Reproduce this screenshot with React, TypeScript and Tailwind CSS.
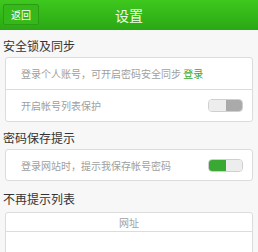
import React from 'react'

const font = { fontFamily: '"Noto Sans CJK SC", "Noto Sans", sans-serif' }

const Toggle: React.FC<{ on: boolean }> = ({ on }) => (
  <div className="flex h-[13px] w-[35px] overflow-hidden rounded-[4px] border border-[#cfcfcf]">
    <div className={on ? 'flex-1 bg-[#3aa934]' : 'flex-1 bg-[#ededed]'} />
    <div className={on ? 'flex-1 bg-[#ededed]' : 'flex-1 bg-[#aaaaaa]'} />
  </div>
)

export default function App() {
  return (
    <div className="h-[252px] w-[258px] overflow-hidden bg-[#f7f7f7]" style={font}>
      <div className="relative flex h-[30px] items-center justify-center bg-gradient-to-b from-[#3ec81e] to-[#2aa814]">
        <div className="absolute left-[3px] top-[4px] flex h-[21px] w-[36px] items-center justify-center rounded-[2px] border border-[#2a9d14] bg-[#35b81a] text-[10px] text-white">
          返回
        </div>
        <span className="text-[14px] text-[#f0ffe8]">设置</span>
      </div>

      <div className="px-[3px] pt-[9px] pb-[4px] text-[12px] leading-[14px] text-[#333]">安全锁及同步</div>
      <div className="mx-[5px] rounded-[3px] border border-[#dcdcdc] bg-white">
        <div className="flex h-[32px] items-center border-b border-[#dcdcdc] pl-[15px] text-[10px] text-[#a0a0a0]">
          登录个人账号，可开启密码安全同步&nbsp;<span className="text-[#3aa934]">登录</span>
        </div>
        <div className="flex h-[31px] items-center justify-between pl-[15px] pr-[9px] text-[10px] text-[#a0a0a0]">
          <span>开启帐号列表保护</span>
          <Toggle on={false} />
        </div>
      </div>

      <div className="px-[3px] pt-[9px] pb-[4px] text-[12px] leading-[14px] text-[#333]">密码保存提示</div>
      <div className="mx-[5px] rounded-[3px] border border-[#dcdcdc] bg-white">
        <div className="flex h-[30px] items-center justify-between pl-[15px] pr-[9px] text-[10px] text-[#a0a0a0]">
          <span>登录网站时，提示我保存帐号密码</span>
          <Toggle on={true} />
        </div>
      </div>

      <div className="px-[3px] pt-[11px] pb-[6px] text-[12px] leading-[14px] text-[#333]">不再提示列表</div>
      <div className="mx-[5px] h-[60px] rounded-t-[3px] border border-[#dcdcdc] bg-white">
        <div className="flex h-[19px] items-center justify-center border-b border-[#dcdcdc] text-[10px] text-[#a0a0a0]">
          网址
        </div>
      </div>
    </div>
  )
}
